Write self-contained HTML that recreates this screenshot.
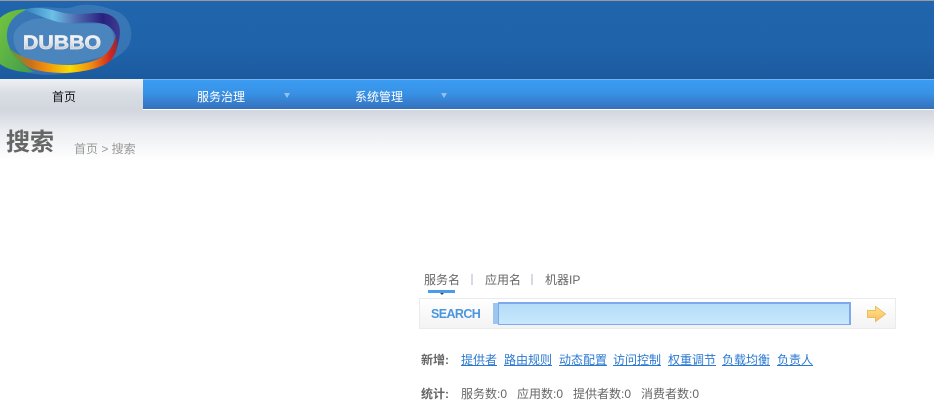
<!DOCTYPE html>
<html lang="zh">
<head>
<meta charset="utf-8">
<title>Dubbo</title>
<style>
html,body{margin:0;padding:0;background:#fff;}
body{width:934px;height:409px;overflow:hidden;position:relative;font-family:"Liberation Sans","Noto Sans CJK SC",sans-serif;font-size:12px;color:#555;}
.a{position:absolute;white-space:nowrap;}
#hd{left:0;top:0;width:934px;height:79px;background:linear-gradient(#2065ad,#1f63aa 60%,#1c5a9f);border-top:1px solid #9a9a9a;box-sizing:border-box;}
#nav{left:0;top:79px;width:934px;height:30px;background:linear-gradient(#3a9cf2,#3892e6 45%,#3570bb);border-top:1px solid #6fb6f5;box-sizing:border-box;}
#home{left:0;top:79px;width:143px;height:31px;background:linear-gradient(#eef0f3,#d8dce3 50%,#d2d7df);}
#line{left:143px;top:109px;width:791px;height:1px;background:#fff;}
#sub{left:0;top:110px;width:934px;height:50px;background:linear-gradient(#d2d6dd,#eceef1 45%,#fff);}
.nt{top:89px;font-size:12px;line-height:16px;color:#fff;}
.tri{width:0;height:0;border-left:3.5px solid transparent;border-right:3.5px solid transparent;border-top:5px solid #8fc1f2;top:93px;}
a{color:#2a78d0;text-decoration:underline;}
.l{top:352px;line-height:16px;}
.s{top:386px;line-height:16px;color:#666;}
</style>
</head>
<body>
<div class="a" id="hd"></div>
<svg class="a" style="left:0;top:0" width="135" height="79" viewBox="0 0 135 79">
<defs>
<linearGradient id="rim" x1="0" y1="0" x2="1" y2="0">
<stop offset="0" stop-color="#4f9e42"/><stop offset=".2" stop-color="#c8701c"/><stop offset=".32" stop-color="#ee8a10"/><stop offset=".56" stop-color="#f7dc00"/><stop offset=".76" stop-color="#ee8a12"/><stop offset=".93" stop-color="#d1281e"/><stop offset="1" stop-color="#8e2a3a"/>
</linearGradient>
<linearGradient id="top" x1="0" y1="0" x2="1" y2="0">
<stop offset="0" stop-color="#2f7fbc"/><stop offset=".3" stop-color="#6cc0e8"/><stop offset=".55" stop-color="#4f69ae"/><stop offset=".82" stop-color="#2b1f7e"/><stop offset="1" stop-color="#3d3d92"/>
</linearGradient>
<linearGradient id="green" x1="0" y1="0" x2="1" y2="1">
<stop offset="0" stop-color="#74c53c"/><stop offset="1" stop-color="#3f9a50"/>
</linearGradient>
<linearGradient id="txt" x1="0" y1="0" x2="0" y2="1">
<stop offset="0" stop-color="#ffffff"/><stop offset=".5" stop-color="#e2e4e8"/><stop offset="1" stop-color="#aeb2ba"/>
</linearGradient>
</defs>
<path d="M18 12C40 2 62 12 76 6C92 2 108 8 118 12C128 16 134 30 130 42C126 56 104 64 84 70C62 76 30 78 8 66L0 62V26Z" fill="#6a9bcb" opacity=".33"/>
<path d="M14 34C18 22 36 15 54 20C72 26 92 22 104 24C114 27 116 40 112 50C106 58 88 60 72 64C56 68 36 66 24 58C16 52 12 42 14 34Z" fill="#4f88c0" opacity=".85"/>
<path d="M0 18C6 12 16 9 29 9C14 14 6 24 7 38C8 50 18 62 34 72C22 73 8 70 0 64Z" fill="url(#green)"/>
<path d="M9 48C16 54 24 58 34 60C46 63 56 65 66 65C80 65 94 62 102 57C110 52 115 42 117 31C119 44 117 54 110 61C102 68 84 72 66 73C50 73 36 71 28 67C20 62 13 56 9 48Z" fill="url(#rim)"/>
<path d="M24 10C34 6 46 8 60 12C74 16 88 13 100 13C112 13 120 20 120 32C120 38 118 44 117 48C118 38 114 27 104 24C90 20 74 25 58 22C46 19 36 14 24 10Z" fill="url(#top)"/>
<text x="23" y="49" font-family="'Liberation Sans',sans-serif" font-weight="700" font-size="19.5" textLength="78" lengthAdjust="spacingAndGlyphs" fill="url(#txt)" stroke="#e8eaee" stroke-width=".7">DUBBO</text>
</svg>
<div class="a" id="nav"></div>
<div class="a" id="home"></div>
<div class="a" id="line"></div>
<div class="a" id="sub"></div>
<div class="a" style="left:52px;top:89px;line-height:16px;font-size:12px;color:#111;">首页</div>
<div class="a nt" style="left:197px;">服务治理</div>
<div class="a tri" style="left:284px;"></div>
<div class="a nt" style="left:355px;">系统管理</div>
<div class="a tri" style="left:441px;"></div>
<div class="a" style="left:6px;top:129px;font-size:24px;line-height:28px;font-weight:700;color:#666;">搜索</div>
<div class="a" style="left:74px;top:141px;font-size:12px;line-height:16px;color:#999;">首页 &gt; 搜索</div>

<div class="a" style="left:424px;top:272px;line-height:16px;color:#666;">服务名</div>
<div class="a" style="left:471px;top:274px;width:2px;height:11px;background:#d6dae3;"></div>
<div class="a" style="left:485px;top:272px;line-height:16px;color:#666;">应用名</div>
<div class="a" style="left:531px;top:274px;width:2px;height:11px;background:#d6dae3;"></div>
<div class="a" style="left:545px;top:272px;line-height:16px;color:#666;">机器IP</div>
<div class="a" style="left:428px;top:290px;width:27px;height:3px;background:#4a9be8;"></div>
<div class="a" style="left:440px;top:293px;width:0;height:0;border-left:2px solid transparent;border-right:2px solid transparent;border-top:2px solid #445;"></div>

<div class="a" style="left:419px;top:298px;width:477px;height:31px;box-sizing:border-box;border:1px solid #ebebeb;background:linear-gradient(#fff,#f3f3f3);"></div>
<div class="a" style="left:431px;top:306px;font-size:12.5px;line-height:17px;font-weight:700;letter-spacing:-.6px;color:#4a96e0;">SEARCH</div>
<div class="a" style="left:493px;top:303px;width:6px;height:21px;background:#9cc6ee;"></div>
<div class="a" style="left:498px;top:302px;width:353px;height:23px;box-sizing:border-box;border:1px solid #7fa9ee;border-right:2px solid #7fa9ee;border-top-width:2px;background:linear-gradient(#b4dcf8,#c8e8fc);"></div>
<svg class="a" style="left:866px;top:305px" width="21" height="18" viewBox="0 0 21 18">
<defs><linearGradient id="ar" x1="0" y1="0" x2="0" y2="1"><stop offset="0" stop-color="#ffe88c"/><stop offset="1" stop-color="#ffb860"/></linearGradient></defs>
<path d="M1.5 5.5H9.5V1.5L19.5 9L9.5 16.5V12.5H1.5Z" fill="url(#ar)" stroke="#e6c060" stroke-width="1"/>
</svg>

<div class="a l" style="left:421px;font-weight:700;color:#666;">新增:</div>
<a class="a l" style="left:461px;">提供者</a>
<a class="a l" style="left:504px;">路由规则</a>
<a class="a l" style="left:559px;">动态配置</a>
<a class="a l" style="left:613px;">访问控制</a>
<a class="a l" style="left:668px;">权重调节</a>
<a class="a l" style="left:722px;">负载均衡</a>
<a class="a l" style="left:777px;">负责人</a>

<div class="a s" style="left:421px;font-weight:700;">统计:</div>
<div class="a s" style="left:461px;">服务数:0</div>
<div class="a s" style="left:517px;">应用数:0</div>
<div class="a s" style="left:573px;">提供者数:0</div>
<div class="a s" style="left:641px;">消费者数:0</div>
</body>
</html>
